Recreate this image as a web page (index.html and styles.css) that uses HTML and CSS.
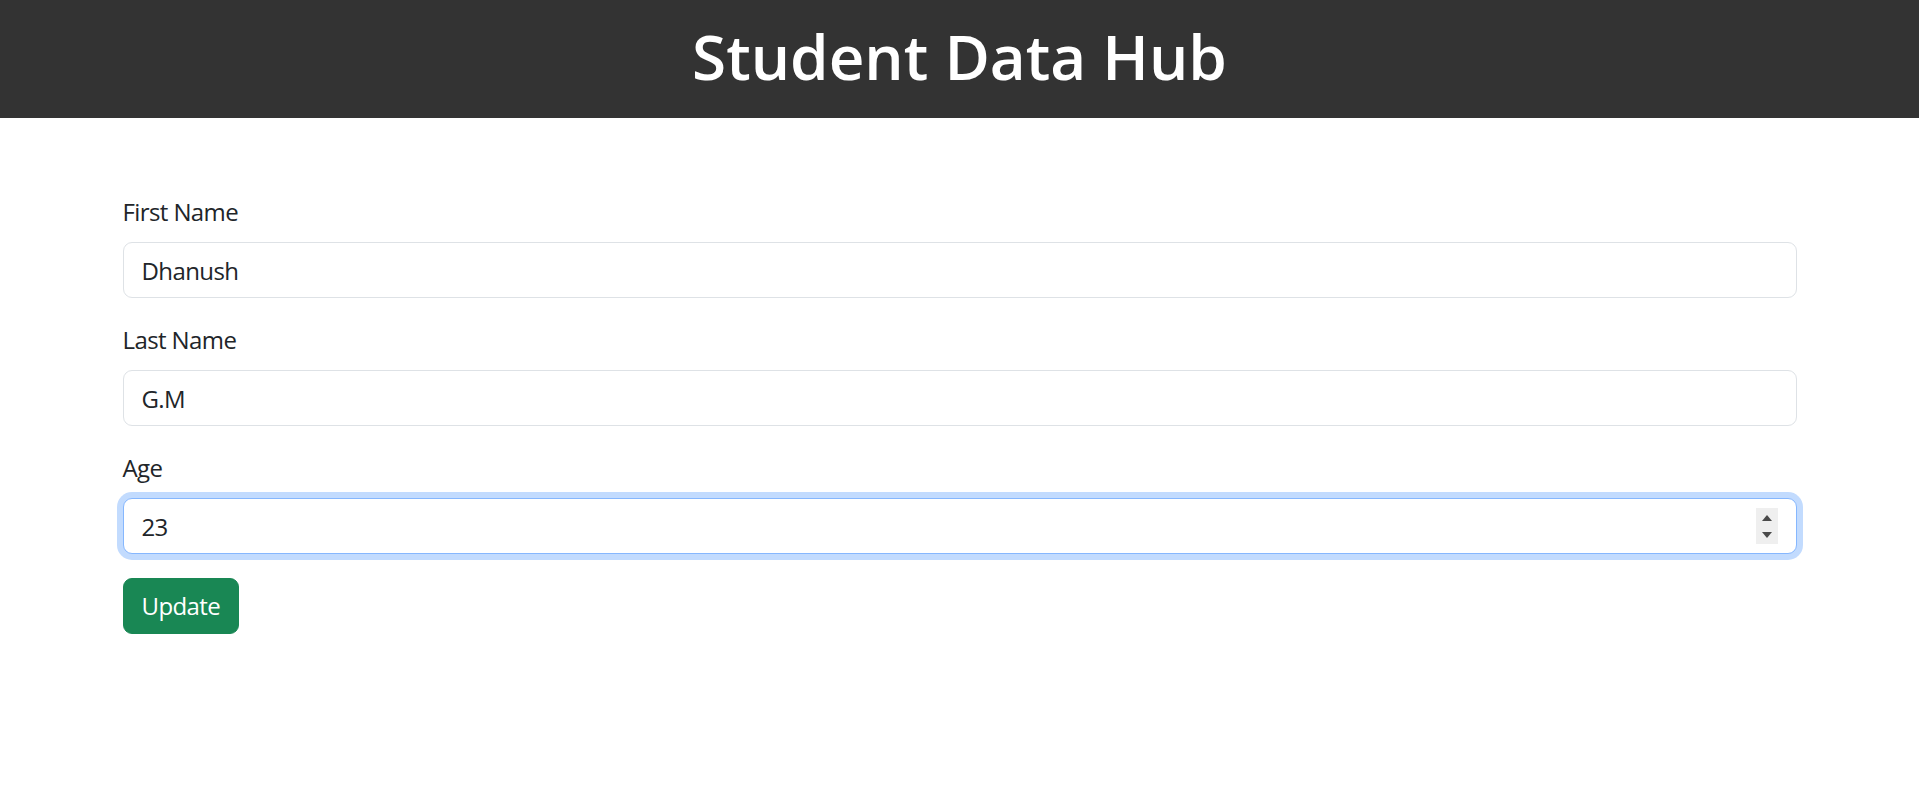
FILE: index.html
```html
<!DOCTYPE html>
<html lang="en">
<head>
<meta charset="utf-8">
<title>Student Data Hub</title>
<link rel="stylesheet" href="styles.css">
</head>
<body>
<header class="topbar">
  <h1 class="title">Student Data Hub</h1>
</header>
<main class="container">
  <form class="form">
    <div class="field">
      <label class="form-label" for="first">First Name</label>
      <input class="form-control" id="first" type="text" value="Dhanush">
    </div>
    <div class="field">
      <label class="form-label" for="last">Last Name</label>
      <input class="form-control" id="last" type="text" value="G.M">
    </div>
    <div class="field">
      <label class="form-label" for="age">Age</label>
      <div class="number-wrap">
        <input class="form-control focused" id="age" type="number" value="23">
        <span class="spinner"><span class="tri up"></span><span class="tri down"></span></span>
      </div>
    </div>
    <button class="btn-success" type="button">Update</button>
  </form>
</main>
</body>
</html>
```
FILE: styles.css
```css
* { box-sizing: border-box; }
html, body { margin: 0; padding: 0; }
body {
  font-family: "Open Sans", "Noto Sans", sans-serif;
  font-size: 24px;
  line-height: 36px;
  letter-spacing: -0.6px;
  color: #212529;
  background: #fff;
}
.topbar {
  height: 118px;
  padding-bottom: 6px;
  background: #333333;
  display: flex;
  align-items: center;
  justify-content: center;
}
.title {
  margin: 0;
  color: #fff;
  font-size: 62px;
  font-weight: 600;
  line-height: 1;
  letter-spacing: 0;
}
.container {
  width: 1710px;
  margin: 0 auto;
  padding: 76px 18px 0;
}
.form { display: flex; flex-direction: column; align-items: flex-start; }
.field { width: 100%; margin-bottom: 24px; display: flex; flex-direction: column; }
.form-label {
  display: block;
  margin-bottom: 12px;
  line-height: 36px;
}
.form-control {
  display: block;
  width: 100%;
  height: 56px;
  padding: 9px 18px;
  font: inherit;
  line-height: 36px;
  letter-spacing: -0.6px;
  color: #212529;
  background: #fff;
  border: 1px solid #dee2e6;
  border-radius: 9px;
  outline: none;
  -moz-appearance: textfield;
}
.form-control::-webkit-inner-spin-button,
.form-control::-webkit-outer-spin-button { -webkit-appearance: none; margin: 0; }
.form-control.focused {
  border-color: #86b7fe;
  box-shadow: 0 0 0 6px rgba(13, 110, 253, 0.25);
}
.number-wrap { position: relative; width: 100%; }
.spinner {
  position: absolute;
  right: 19px;
  top: 10px;
  width: 22px;
  height: 36px;
  background: #efefef;
  display: flex;
  flex-direction: column;
  align-items: center;
  justify-content: center;
  gap: 11px;
}
.tri { width: 0; height: 0; border-left: 5px solid transparent; border-right: 5px solid transparent; }
.tri.up { border-bottom: 6px solid #4a4a4a; }
.tri.down { border-top: 6px solid #4a4a4a; }
.btn-success {
  font: inherit;
  line-height: 36px;
  letter-spacing: -0.6px;
  color: #fff;
  background: #198754;
  border: 1px solid #198754;
  border-radius: 9px;
  padding: 9px 18px;
  height: 56px;
  cursor: pointer;
}
```
